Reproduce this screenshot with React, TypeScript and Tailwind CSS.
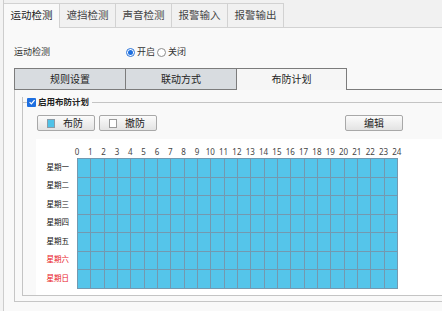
const hours = Array.from({ length: 25 }, (_, i) => i);
const days = [
  { name: "星期一", red: false },
  { name: "星期二", red: false },
  { name: "星期三", red: false },
  { name: "星期四", red: false },
  { name: "星期五", red: false },
  { name: "星期六", red: true },
  { name: "星期日", red: true },
];

const topTabs = ["运动检测", "遮挡检测", "声音检测", "报警输入", "报警输出"];
const subTabs = ["规则设置", "联动方式", "布防计划"];

const Btn = ({ children }: { children: React.ReactNode }) => (
  <button className="flex items-center w-[58px] h-[16px] border border-[#a8a8a8] rounded-[2px] bg-[linear-gradient(#fbfbfb,#e3e3e3)] text-[10px] text-[#222] leading-none">
    {children}
  </button>
);

const App = () => {
  return (
    <div className="w-[442px] h-[311px] overflow-hidden bg-[#f3f3f3] font-['Noto_Sans','Noto_Sans_CJK_SC',sans-serif]">
      <div className="ml-[3px] h-full border-l border-[#cdcdcd] bg-[#f9f9f9]">
        {/* top tabs */}
        <div className="flex pt-[3px] bg-[#f1f1f1] border-b border-[#d2d2d2] h-[28px]">
          {topTabs.map((t, i) => (
            <div
              key={t}
              className={
                i === 0
                  ? "w-[56px] h-[25px] -mb-px bg-[#f9f9f9] border-r border-t border-[#d2d2d2] flex items-center justify-center text-[10.5px] text-[#222]"
                  : "w-[56px] h-[24px] bg-[#f1f1f1] border-r border-t border-[#d2d2d2] flex items-center justify-center text-[10.5px] text-[#444]"
              }
            >
              {t}
            </div>
          ))}
        </div>

        {/* enable row */}
        <div className="flex items-center h-[12px] mt-[18px] text-[9px] text-[#333]">
          <span className="ml-[10px] w-[112px]">运动检测</span>
          <span className="w-[9px] h-[9px] rounded-full border border-[#2a73d9] flex items-center justify-center bg-white">
            <span className="w-[5px] h-[5px] rounded-full bg-[#1d6fe0]" />
          </span>
          <span className="ml-[2px]">开启</span>
          <span className="ml-[2px] w-[9px] h-[9px] rounded-full border border-[#8c8c8c] bg-white" />
          <span className="ml-[2px]">关闭</span>
        </div>

        {/* sub tabs */}
        <div className="flex mt-[10px] ml-[10px] h-[22px] border-b border-[#7c7c7c]">
          {subTabs.map((t, i) => (
            <div
              key={t}
              className={
                i === 2
                  ? "w-[111px] h-[22px] bg-[#f6f6f6] border border-b-0 border-[#7c7c7c] flex items-center justify-center text-[10px] text-[#222]"
                  : "w-[111px] h-[21px] bg-[#d8dce0] border-t border-l border-[#7c7c7c] flex items-center justify-center text-[10px] text-[#222]"
              }
            >
              {t}
            </div>
          ))}
        </div>

        {/* sub panel */}
        <div className="ml-[10px] w-[460px] border-l border-b border-[#c6c6c6] pl-[7px] pt-[12px] pb-[5px]">
          <div className="border-l border-b border-[#c4c4c4] pl-[13px]">
            {/* legend row, drawn over the top edge */}
            <div className="flex items-center h-[10px] -mt-[5px] -ml-[14px]">
              <span className="w-[5px] border-t border-[#c4c4c4]" />
              <span className="w-[9px] h-[9px] rounded-[1px] bg-[#1e6fe0] flex items-center justify-center">
                <svg viewBox="0 0 10 10" className="w-[8px] h-[8px]">
                  <path d="M2 5.2 L4.2 7.3 L8.2 2.6" fill="none" stroke="white" strokeWidth="1.6" />
                </svg>
              </span>
              <span className="ml-[2px] mr-[3px] text-[8.5px] font-bold text-[#222]">启用布防计划</span>
              <span className="flex-1 border-t border-[#c4c4c4]" />
            </div>

            <div className="flex mt-[8px] ml-[1px] w-[366px]">
              <Btn>
                <span className="ml-[9px] w-[8px] h-[9px] border border-[#8a9ba6] bg-[#4fc2e8]" />
                <span className="ml-[8px]">布防</span>
              </Btn>
              <div className="ml-[4px]">
                <Btn>
                  <span className="ml-[9px] w-[8px] h-[9px] border border-[#9a9a9a] bg-white" />
                  <span className="ml-[8px]">撤防</span>
                </Btn>
              </div>
              <div className="ml-auto">
                <Btn>
                  <span className="w-full text-center">编辑</span>
                </Btn>
              </div>
            </div>

            <div className="mt-[8px] h-[156px] bg-white">
              <div className="flex h-[19px] pt-[7px] ml-[34.33px] text-[8px] leading-[11px] text-[#444]">
                {hours.map((h) => (
                  <span key={h} className="w-[13.333px] text-center shrink-0">
                    {h}
                  </span>
                ))}
              </div>
              <div className="flex">
                <div className="w-[41px] pr-[8px] flex flex-col">
                  {days.map((d) => (
                    <span
                      key={d.name}
                      className={
                        d.red
                          ? "h-[18.57px] flex items-center justify-end text-[7.5px] text-[#e8141c]"
                          : "h-[18.57px] flex items-center justify-end text-[7.5px] text-[#111]"
                      }
                    >
                      {d.name}
                    </span>
                  ))}
                </div>
                <div className="w-[321px] h-[131px] grid grid-cols-[repeat(24,1fr)] grid-rows-[repeat(7,1fr)] border-l border-t border-[#7399b0] bg-[#55c5ea]">
                  {Array.from({ length: 168 }, (_, i) => (
                    <div key={i} className="border-r border-b border-[#7399b0]" />
                  ))}
                </div>
              </div>
            </div>
          </div>
        </div>
      </div>
    </div>
  );
};

export default App;
